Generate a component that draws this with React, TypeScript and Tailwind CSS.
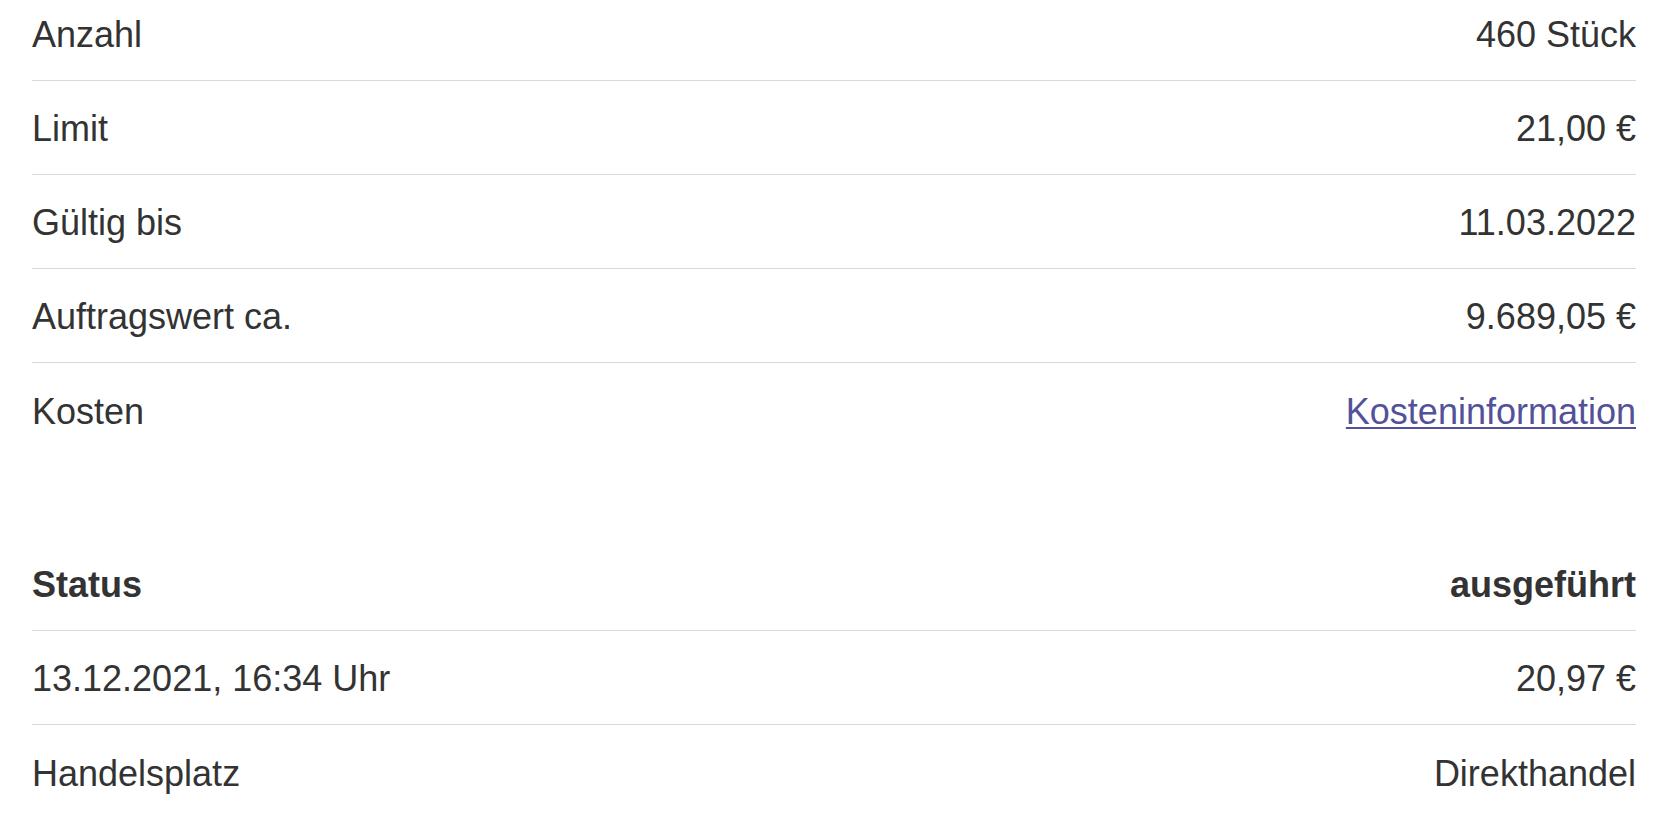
type Row = {
  label: string;
  value: string;
  link?: boolean;
  bold?: boolean;
};

const orderRows: Row[] = [
  { label: "Anzahl", value: "460 Stück" },
  { label: "Limit", value: "21,00 €" },
  { label: "Gültig bis", value: "11.03.2022" },
  { label: "Auftragswert ca.", value: "9.689,05 €" },
  { label: "Kosten", value: "Kosteninformation", link: true },
];

const statusRows: Row[] = [
  { label: "Status", value: "ausgeführt", bold: true },
  { label: "13.12.2021, 16:34 Uhr", value: "20,97 €" },
  { label: "Handelsplatz", value: "Direkthandel" },
];

function DetailRow({ row, last }: { row: Row; last: boolean }) {
  return (
    <div
      className={`flex h-[94px] items-center justify-between pt-[3px] ${
        last ? "" : "border-b border-[#d9d9d9]"
      }`}
    >
      <span className={row.bold ? "font-bold" : ""}>{row.label}</span>
      {row.link ? (
        <a
          href="#"
          className="text-[#525199] underline decoration-2 underline-offset-[3px]"
        >
          {row.value}
        </a>
      ) : (
        <span className={row.bold ? "font-bold" : ""}>{row.value}</span>
      )}
    </div>
  );
}

export default function App() {
  return (
    <div className="h-[834px] w-full overflow-hidden bg-white px-8 font-['Liberation_Sans',Arial,sans-serif] text-[36px] leading-none text-[#333333]">
      <div className="-mt-[13px]">
        {orderRows.map((row, i) => (
          <DetailRow key={row.label} row={row} last={i === orderRows.length - 1} />
        ))}
      </div>
      <div className="mt-[80px]">
        {statusRows.map((row, i) => (
          <DetailRow key={row.label} row={row} last={i === statusRows.length - 1} />
        ))}
      </div>
    </div>
  );
}
